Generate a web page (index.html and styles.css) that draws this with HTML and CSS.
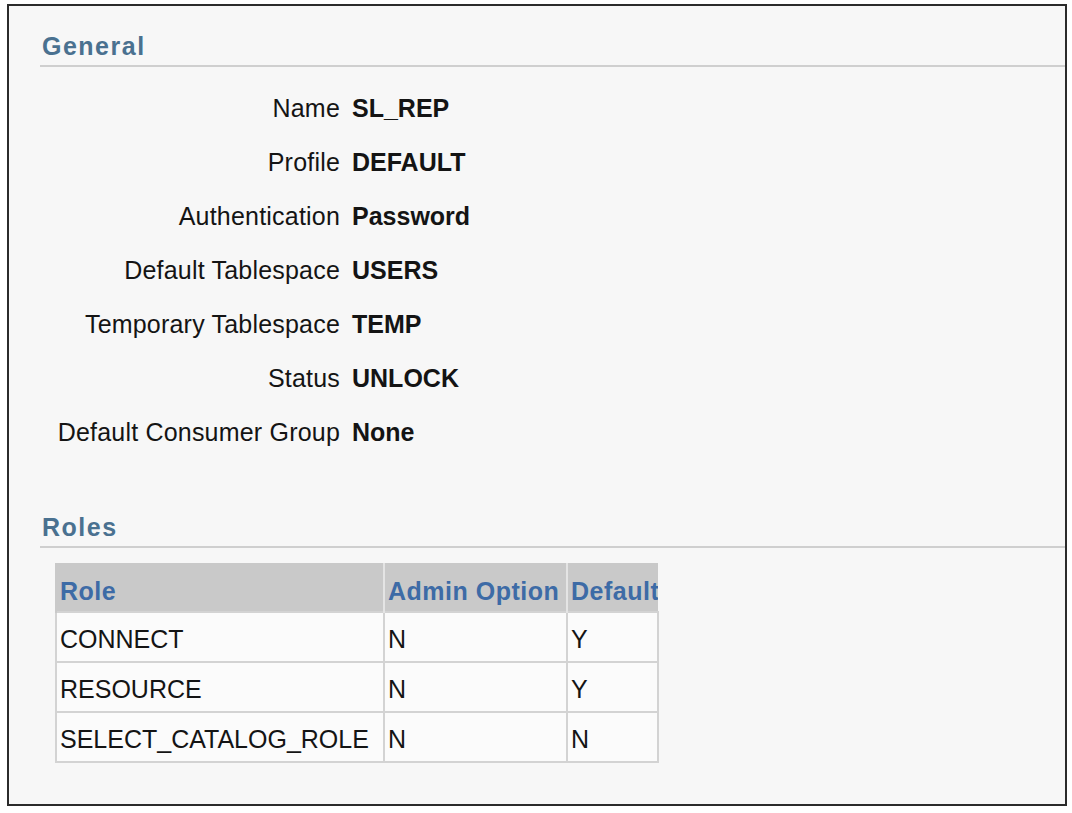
FILE: index.html
```html
<!DOCTYPE html>
<html>
<head>
<meta charset="utf-8">
<title>User SL_REP</title>
<link rel="stylesheet" href="styles.css">
</head>
<body>
<div class="frame">
  <h2 class="section-title">General</h2>
  <div class="props">
    <div class="label">Name</div><div class="value">SL_REP</div>
    <div class="label">Profile</div><div class="value">DEFAULT</div>
    <div class="label">Authentication</div><div class="value">Password</div>
    <div class="label">Default Tablespace</div><div class="value">USERS</div>
    <div class="label">Temporary Tablespace</div><div class="value">TEMP</div>
    <div class="label">Status</div><div class="value">UNLOCK</div>
    <div class="label">Default Consumer Group</div><div class="value">None</div>
  </div>
  <h2 class="section-title roles-title">Roles</h2>
  <table class="roles">
    <colgroup>
      <col class="c-role">
      <col class="c-admin">
      <col class="c-default">
    </colgroup>
    <thead>
      <tr><th>Role</th><th>Admin Option</th><th>Default</th></tr>
    </thead>
    <tbody>
      <tr><td>CONNECT</td><td>N</td><td>Y</td></tr>
      <tr><td>RESOURCE</td><td>N</td><td>Y</td></tr>
      <tr><td>SELECT_CATALOG_ROLE</td><td>N</td><td>N</td></tr>
    </tbody>
  </table>
</div>
</body>
</html>
```
FILE: styles.css
```css
html, body {
  margin: 0;
  padding: 0;
  background: #ffffff;
}
body {
  font-family: "Liberation Sans", Arial, sans-serif;
  font-size: 25px;
  color: #141414;
}
.frame {
  box-sizing: border-box;
  margin: 4px 0 0 7px;
  width: 1060px;
  height: 802px;
  border: 2px solid #2b2b2b;
  background: #f7f7f7;
  padding: 25px 0 0 31px;
}
.section-title {
  margin: 0;
  padding: 0 0 4px 2px;
  font-size: 25px;
  line-height: 30px;
  font-weight: 700;
  letter-spacing: 1.5px;
  color: #4a7190;
  border-bottom: 2px solid #cfcfcf;
}
.roles-title {
  margin-top: 53px;
}
.props {
  display: grid;
  grid-template-columns: 300px auto;
  column-gap: 12px;
  grid-auto-rows: 54px;
  line-height: 54px;
  margin-top: 14px;
}
.label {
  text-align: right;
  letter-spacing: 0.2px;
}
.value {
  font-weight: 700;
}
.roles {
  margin: 15px 0 0 15px;
  border-collapse: collapse;
  table-layout: fixed;
  width: 602px;
  font-size: 25px;
  line-height: 28px;
}
.c-role { width: 328px; }
.c-admin { width: 183px; }
.c-default { width: 91px; }
.roles th {
  background: #c9c9c9;
  color: #3d6ba6;
  font-weight: 700;
  text-align: left;
  letter-spacing: 0.5px;
  padding: 14px 2px 6px 3px;
  border-left: 2px solid #e4e4e4;
  white-space: nowrap;
  overflow: hidden;
}
.roles th:first-child {
  border-left: 2px solid #c9c9c9;
}
.roles td {
  background: #fbfbfb;
  border: 2px solid #d3d3d3;
  padding: 12px 2px 8px 3px;
  white-space: nowrap;
  overflow: hidden;
}
```
